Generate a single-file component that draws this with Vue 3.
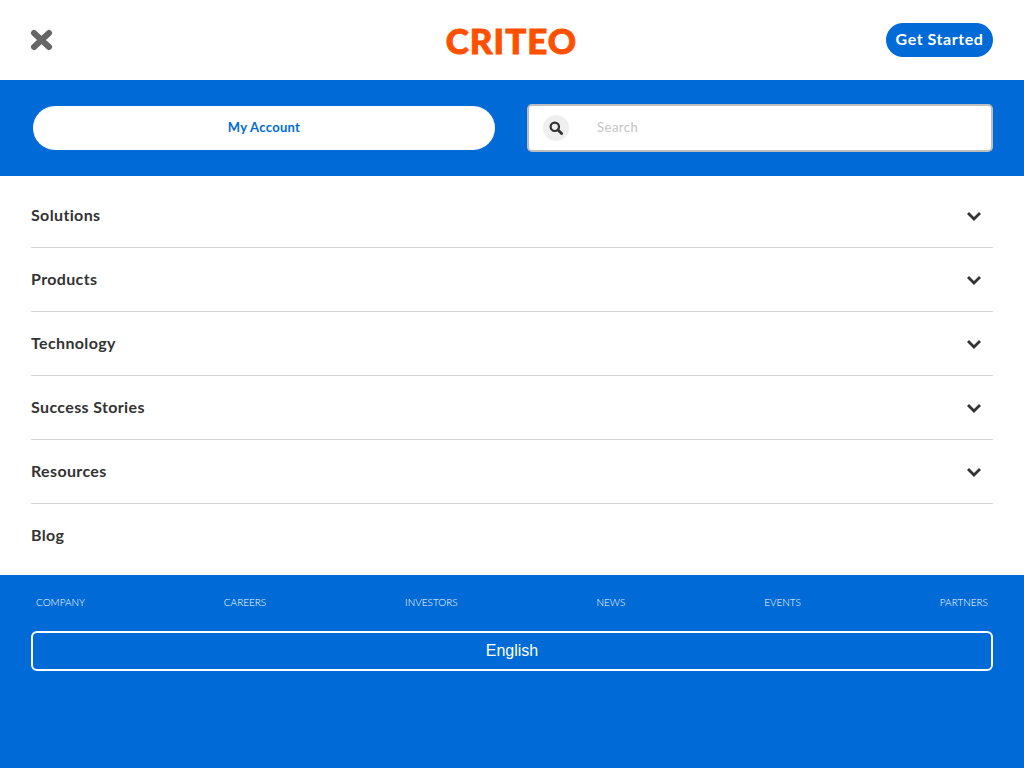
<script setup>
const menu = [
  { label: "Solutions", more: true },
  { label: "Products", more: true },
  { label: "Technology", more: true },
  { label: "Success Stories", more: true },
  { label: "Resources", more: true },
  { label: "Blog", more: false },
];
const links = ["Company", "Careers", "Investors", "News", "Events", "Partners"];
</script>

<template>
  <div class="page">
    <header class="top">
      <svg class="close" width="23" height="22" viewBox="0 0 23 22">
        <path d="M4 4 L19 18 M19 4 L4 18" stroke="#666" stroke-width="6" stroke-linecap="round" fill="none" />
      </svg>
      <span class="logo">CRITEO</span>
      <a class="started">Get Started</a>
    </header>

    <section class="band">
      <a class="account">My Account</a>
      <div class="search">
        <span class="search-icon">
          <svg width="14" height="14" viewBox="0 0 14 14">
            <circle cx="5.8" cy="5.8" r="4.2" stroke="#333" stroke-width="2.2" fill="none" />
            <path d="M9 9 L12.6 12.6" stroke="#333" stroke-width="2.8" stroke-linecap="round" />
          </svg>
        </span>
        <span class="placeholder">Search</span>
      </div>
    </section>

    <nav class="menu">
      <div v-for="m in menu" :key="m.label" class="row">
        <span class="label">{{ m.label }}</span>
        <svg v-if="m.more" class="chev" width="16" height="10" viewBox="0 0 16 10">
          <path d="M2 2 L8 8 L14 2" stroke="#333" stroke-width="2.8" fill="none" />
        </svg>
      </div>
    </nav>

    <footer class="foot">
      <div class="links">
        <a v-for="l in links" :key="l">{{ l }}</a>
      </div>
      <div class="lang">English</div>
    </footer>
  </div>
</template>

<style>
html, body {
  margin: 0;
  background: #fff;
}
</style>

<style scoped>
.page {
  display: flex;
  flex-direction: column;
  height: 768px;
  font-family: Lato, "Liberation Sans", sans-serif;
}
.top {
  height: 80px;
  flex: none;
  display: grid;
  grid-template-columns: 1fr auto 1fr;
  align-items: center;
  padding: 0 31px 0 30px;
}
.close {
  display: block;
}
.logo {
  font-weight: 900;
  font-size: 35px;
  line-height: 40px;
  letter-spacing: 1px;
  color: #ff5000;
  -webkit-text-stroke: 0.9px #ff5000;
}
.started {
  justify-self: end;
  box-sizing: border-box;
  padding-bottom: 3px;
  display: flex;
  align-items: center;
  justify-content: center;
  width: 107px;
  height: 34px;
  border-radius: 17px;
  background: #006bd6;
  color: #fff;
  font-size: 16px;
  font-weight: 700;
  letter-spacing: 0.55px;
}
.band {
  height: 96px;
  flex: none;
  box-sizing: border-box;
  background: #006bd6;
  display: flex;
  align-items: center;
  padding: 0 31px 0 33px;
  gap: 32px;
}
.account {
  box-sizing: border-box;
  padding-bottom: 2px;
  width: 462px;
  height: 44px;
  border-radius: 22px;
  background: #fff;
  color: #006bd6;
  font-size: 13px;
  font-weight: 700;
  letter-spacing: 0.3px;
  display: flex;
  align-items: center;
  justify-content: center;
}
.search {
  flex: 1;
  height: 48px;
  box-sizing: border-box;
  border: 2px solid #bdbdbd;
  border-radius: 5px;
  background: #fff;
  display: flex;
  align-items: center;
  padding-left: 14px;
}
.search-icon {
  width: 26px;
  height: 26px;
  border-radius: 50%;
  background: #efefef;
  display: flex;
  align-items: center;
  justify-content: center;
}
.placeholder {
  margin-left: 28px;
  padding-bottom: 2px;
  font-size: 13px;
  letter-spacing: 0.5px;
  color: #c4c4c4;
}
.menu {
  flex: 1;
  padding: 8px 31px 0;
}
.row {
  height: 64px;
  box-sizing: border-box;
  display: flex;
  align-items: center;
  justify-content: space-between;
  padding: 0 11px 1px 0;
  border-bottom: 1px solid #d4d4d4;
  color: #333;
  font-size: 16px;
  font-weight: 700;
  letter-spacing: 0.36px;
}
.row:last-child {
  border-bottom: none;
}
.label {
  margin-bottom: 2px;
}
.chev {
  display: block;
  margin-top: 2px;
}
.foot {
  height: 193px;
  flex: none;
  box-sizing: border-box;
  background: #006bd6;
  padding: 21px 31px 0;
}
.links {
  display: flex;
  justify-content: space-between;
  padding: 0 5px;
  height: 12px;
  align-items: center;
}
.links a {
  color: #fff;
  font-size: 10px;
  font-weight: 300;
  line-height: 12px;
  text-transform: uppercase;
}
.lang {
  margin-top: 23px;
  height: 40px;
  box-sizing: border-box;
  border: 2px solid #fff;
  border-radius: 6px;
  color: #fff;
  font-family: "Liberation Sans", Arial, sans-serif;
  font-size: 16px;
  display: flex;
  align-items: center;
  justify-content: center;
}
</style>
